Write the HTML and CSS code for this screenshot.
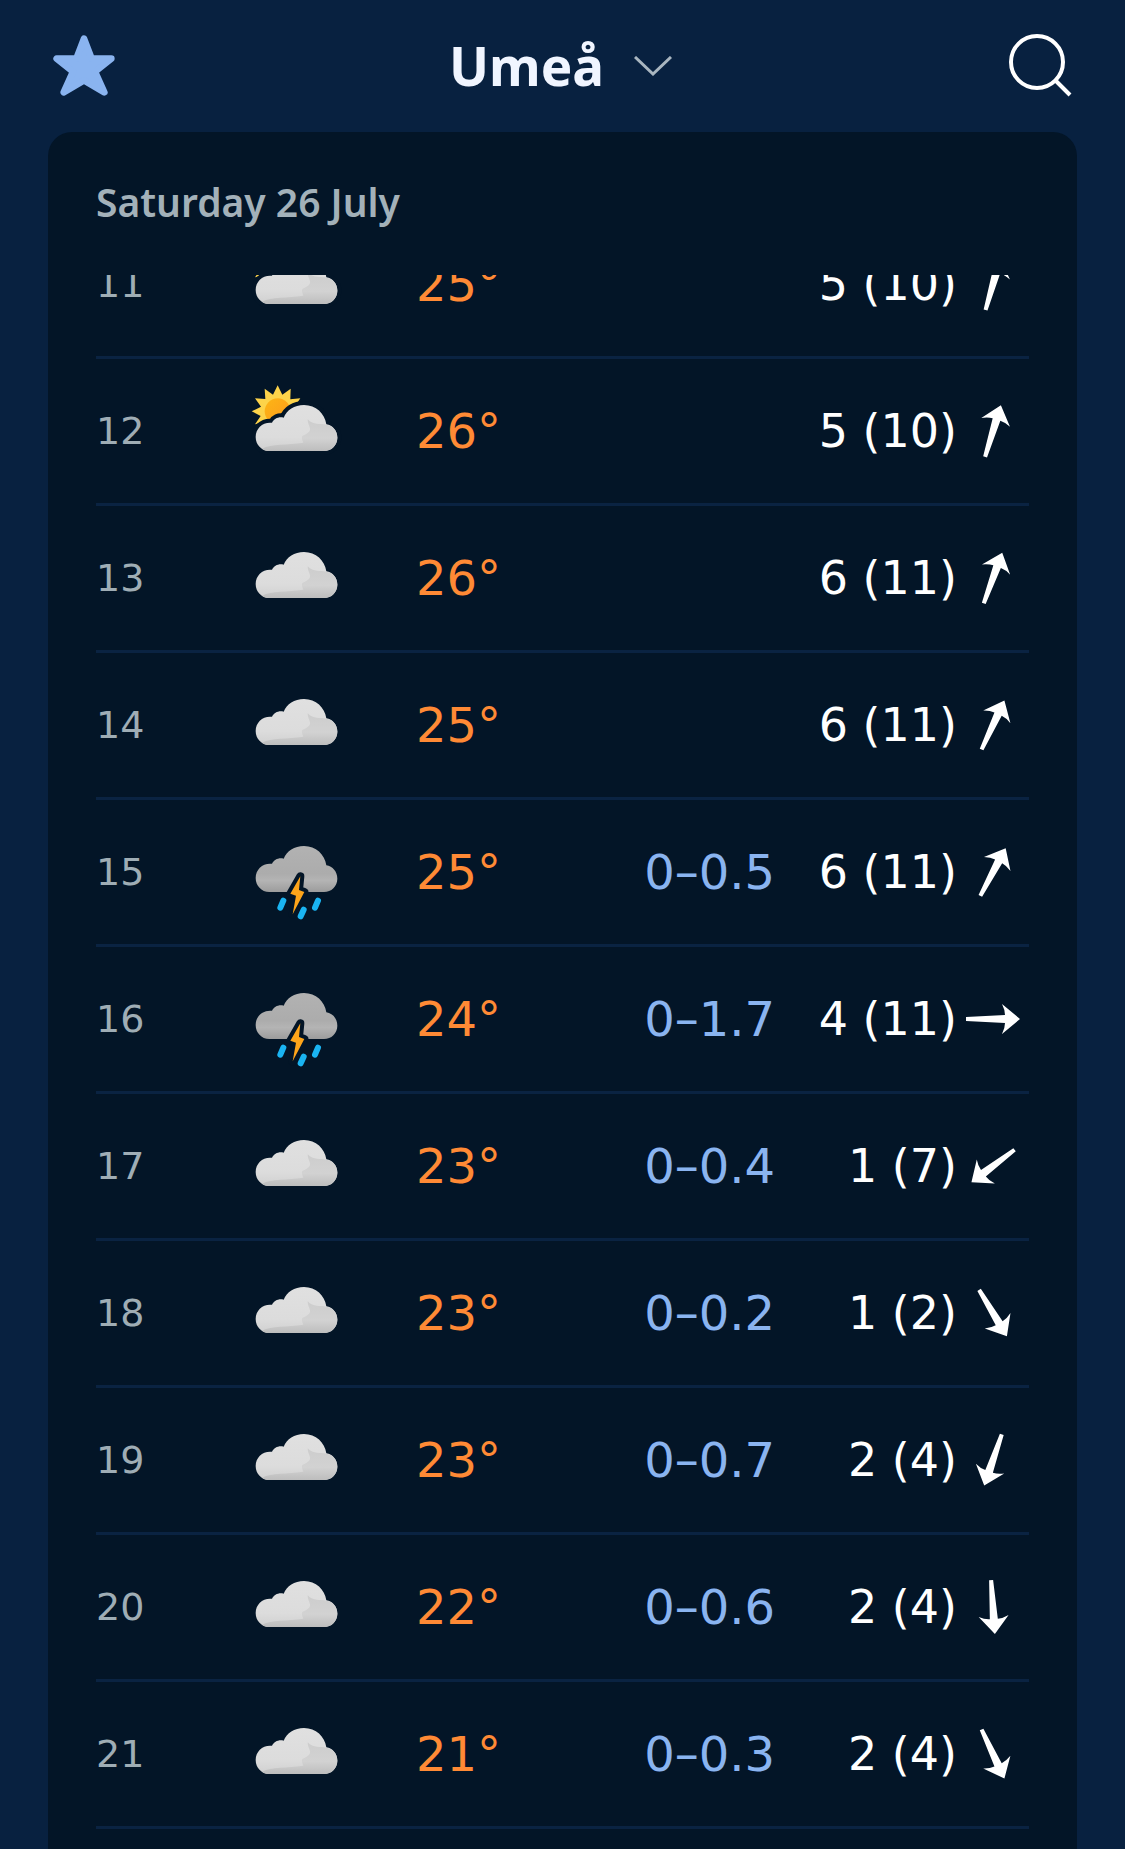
FILE: index.html
```html
<!DOCTYPE html>
<html lang="en">
<head>
    <meta charset="UTF-8">
    <meta name="viewport" content="width=device-width, initial-scale=1.0">
    <title>Umeå</title>
    <link rel="stylesheet" href="styles.css">
</head>
<body>
    <!-- Shared weather symbols -->
    <svg class="symbols" aria-hidden="true">
        <defs>
            <linearGradient id="cloud-fill" x1="0" y1="0" x2="0" y2="1">
                <stop offset="0" stop-color="#e0e0e0"/>
                <stop offset="0.7" stop-color="#dcdcdc"/>
                <stop offset="1" stop-color="#d0d0d0"/>
            </linearGradient>
            <linearGradient id="shade-fill" x1="0" y1="0" x2="0" y2="1">
                <stop offset="0" stop-color="#cdcdcd"/>
                <stop offset="0.6" stop-color="#d2d2d2"/>
                <stop offset="1" stop-color="#bdbdbd"/>
            </linearGradient>
            <linearGradient id="storm-fill" x1="0" y1="0" x2="0" y2="1">
                <stop offset="0" stop-color="#b2b2b2"/>
                <stop offset="0.6" stop-color="#acacac"/>
                <stop offset="0.75" stop-color="#b4b4b4"/>
                <stop offset="1" stop-color="#9c9c9c"/>
            </linearGradient>
            <linearGradient id="sun-fill" x1="0" y1="0" x2="1" y2="1">
                <stop offset="0" stop-color="#fdb515"/>
                <stop offset="1" stop-color="#fc9a1c"/>
            </linearGradient>
            <path id="cloud-shape" d="M88 243C64 243 47 224 47 201C47 176 66 158 90 158L96 158C102 146 116 139 131 143C140 120 163 105 192 105C228 105 254 130 259 163C278 166 292 182 292 203C292 226 274 243 252 243Z"/>
            <symbol id="cloud" viewBox="0 0 330 366">
                <use href="#cloud-shape" fill="url(#cloud-fill)"/>
                <path fill="url(#shade-fill)" d="M203 148C220 166 242 160 259 164C278 166 292 182 292 203C292 226 274 243 252 243H88C78 243 72 240 66 236C96 220 140 226 190 218C186 206 184 202 188 197C204 192 214 182 209 172C207 164 203 160 203 148Z"/>
            </symbol>
            <symbol id="partly" viewBox="0 0 330 366">
                <path fill="#fdd34a" d="M113 46L127 74L152 56L151 88L181 85L164 110L191 124L164 138L45 163L62 138L35 124L63 110L45 85L76 87L74 56L99 74Z"/>
                <circle cx="113" cy="124" r="39" fill="url(#sun-fill)"/>
                <use href="#cloud-shape" fill="#031527" stroke="#031527" stroke-width="24"/>
                <use href="#cloud"/>
            </symbol>
            <symbol id="storm" viewBox="0 0 330 366">
                <use href="#cloud-shape" fill="url(#storm-fill)"/>
                <path fill="#fea51a" stroke="#031527" stroke-width="24" stroke-linejoin="round" paint-order="stroke" d="M181 196L151 248L168 254L158 310L193 243L177 237Z"/>
                <path stroke="#1ab4f2" stroke-width="18" stroke-linecap="round" d="M130 269L121 290M191 296L182 316M234 269L225 290"/>
            </symbol>
            <symbol id="arrow" viewBox="-30 -30 60 60">
                <path fill="#fff" d="M0 -27L15 -9Q9 -12 4 -12L2 27H-2L-4 -12Q-9 -12 -15 -9Z"/>
            </symbol>
        </defs>
    </svg>

    <header class="topbar">
        <button class="icon-button" type="button" aria-label="Favourite">
            <svg class="icon" viewBox="66 71 192 192">
                <path fill="#8ab4f0" stroke="#8ab4f0" stroke-width="20" stroke-linejoin="round" d="M162 85L185 145L244 145L195 184L223 246L162 210L101 246L129 184L80 145L139 145Z"/>
            </svg>
        </button>
        <button class="place" type="button">
            Umeå
            <svg class="chevron" viewBox="0 0 38 20">
                <path fill="none" stroke="#a9b6c0" stroke-width="3" d="M1 1L19 18L37 1"/>
            </svg>
        </button>
        <button class="icon-button search" type="button" aria-label="Search">
            <svg class="icon" viewBox="0 0 64 64">
                <circle cx="28" cy="28" r="26" fill="none" stroke="#fff" stroke-width="4"/>
                <path stroke="#fff" stroke-width="4" d="M46 46L61 61"/>
            </svg>
        </button>
    </header>

    <main class="card">
        <h1 class="date">Saturday 26 July</h1>
        <div class="scroller">
            <table class="forecast">
                <colgroup>
                    <col class="col-hour">
                    <col class="col-symbol">
                    <col>
                    <col class="col-rain">
                    <col class="col-wind">
                    <col class="col-arrow">
                </colgroup>
                <tbody>
                    <tr>
                        <th scope="row">11</th>
                        <td><svg class="weather"><use href="#partly"/></svg></td>
                        <td class="temp">25°</td>
                        <td class="rain"></td>
                        <td class="wind">5 (10)</td>
                        <td class="direction"><svg class="arrow" viewBox="-30 -30 60 60"><use href="#arrow" x="-30" y="-30" width="60" height="60" transform="rotate(16)"/></svg></td>
                    </tr>
                    <tr>
                        <th scope="row">12</th>
                        <td><svg class="weather"><use href="#partly"/></svg></td>
                        <td class="temp">26°</td>
                        <td class="rain"></td>
                        <td class="wind">5 (10)</td>
                        <td class="direction"><svg class="arrow" viewBox="-30 -30 60 60"><use href="#arrow" x="-30" y="-30" width="60" height="60" transform="rotate(17)"/></svg></td>
                    </tr>
                    <tr>
                        <th scope="row">13</th>
                        <td><svg class="weather"><use href="#cloud"/></svg></td>
                        <td class="temp">26°</td>
                        <td class="rain"></td>
                        <td class="wind">6 (11)</td>
                        <td class="direction"><svg class="arrow" viewBox="-30 -30 60 60"><use href="#arrow" x="-30" y="-30" width="60" height="60" transform="rotate(20)"/></svg></td>
                    </tr>
                    <tr>
                        <th scope="row">14</th>
                        <td><svg class="weather"><use href="#cloud"/></svg></td>
                        <td class="temp">25°</td>
                        <td class="rain"></td>
                        <td class="wind">6 (11)</td>
                        <td class="direction"><svg class="arrow" viewBox="-30 -30 60 60"><use href="#arrow" x="-30" y="-30" width="60" height="60" transform="rotate(25)"/></svg></td>
                    </tr>
                    <tr>
                        <th scope="row">15</th>
                        <td><svg class="weather"><use href="#storm"/></svg></td>
                        <td class="temp">25°</td>
                        <td class="rain">0–0.5</td>
                        <td class="wind">6 (11)</td>
                        <td class="direction"><svg class="arrow" viewBox="-30 -30 60 60"><use href="#arrow" x="-30" y="-30" width="60" height="60" transform="rotate(28)"/></svg></td>
                    </tr>
                    <tr>
                        <th scope="row">16</th>
                        <td><svg class="weather"><use href="#storm"/></svg></td>
                        <td class="temp">24°</td>
                        <td class="rain">0–1.7</td>
                        <td class="wind">4 (11)</td>
                        <td class="direction"><svg class="arrow" viewBox="-30 -30 60 60"><use href="#arrow" x="-30" y="-30" width="60" height="60" transform="rotate(90)"/></svg></td>
                    </tr>
                    <tr>
                        <th scope="row">17</th>
                        <td><svg class="weather"><use href="#cloud"/></svg></td>
                        <td class="temp">23°</td>
                        <td class="rain">0–0.4</td>
                        <td class="wind">1 (7)</td>
                        <td class="direction"><svg class="arrow" viewBox="-30 -30 60 60"><use href="#arrow" x="-30" y="-30" width="60" height="60" transform="rotate(233)"/></svg></td>
                    </tr>
                    <tr>
                        <th scope="row">18</th>
                        <td><svg class="weather"><use href="#cloud"/></svg></td>
                        <td class="temp">23°</td>
                        <td class="rain">0–0.2</td>
                        <td class="wind">1 (2)</td>
                        <td class="direction"><svg class="arrow" viewBox="-30 -30 60 60"><use href="#arrow" x="-30" y="-30" width="60" height="60" transform="rotate(149)"/></svg></td>
                    </tr>
                    <tr>
                        <th scope="row">19</th>
                        <td><svg class="weather"><use href="#cloud"/></svg></td>
                        <td class="temp">23°</td>
                        <td class="rain">0–0.7</td>
                        <td class="wind">2 (4)</td>
                        <td class="direction"><svg class="arrow" viewBox="-30 -30 60 60"><use href="#arrow" x="-30" y="-30" width="60" height="60" transform="rotate(199)"/></svg></td>
                    </tr>
                    <tr>
                        <th scope="row">20</th>
                        <td><svg class="weather"><use href="#cloud"/></svg></td>
                        <td class="temp">22°</td>
                        <td class="rain">0–0.6</td>
                        <td class="wind">2 (4)</td>
                        <td class="direction"><svg class="arrow" viewBox="-30 -30 60 60"><use href="#arrow" x="-30" y="-30" width="60" height="60" transform="rotate(176)"/></svg></td>
                    </tr>
                    <tr>
                        <th scope="row">21</th>
                        <td><svg class="weather"><use href="#cloud"/></svg></td>
                        <td class="temp">21°</td>
                        <td class="rain">0–0.3</td>
                        <td class="wind">2 (4)</td>
                        <td class="direction"><svg class="arrow" viewBox="-30 -30 60 60"><use href="#arrow" x="-30" y="-30" width="60" height="60" transform="rotate(155)"/></svg></td>
                    </tr>
                </tbody>
            </table>
        </div>
    </main>
</body>
</html>
```
FILE: styles.css
```css
* {
    box-sizing: border-box;
}
body {
    display: flex;
    flex-direction: column;
    height: 100vh;
    margin: 0;
    overflow: hidden;
    background: #082140;
    color: #fff;
    font-family: "Noto Sans", sans-serif;
}
.symbols {
    position: absolute;
    width: 0;
    height: 0;
}
button {
    padding: 0;
    border: none;
    background: none;
    color: inherit;
    font: inherit;
    cursor: pointer;
}
svg {
    display: block;
}

/* Top bar */
.topbar {
    display: grid;
    grid-template-columns: 1fr auto 1fr;
    align-items: center;
    height: 132px;
    padding: 0 52px;
}
.icon-button {
    width: 64px;
    height: 64px;
}
.icon {
    width: 64px;
    height: 64px;
}
.search {
    justify-self: end;
}
.place {
    display: flex;
    align-items: center;
    gap: 30px;
    padding-right: 4px;
    color: #f0f5ff;
    font-size: 53px;
    font-weight: 700;
    line-height: 72px;
}
.chevron {
    width: 38px;
    height: 20px;
}

/* Day card */
.card {
    display: flex;
    flex: 1;
    flex-direction: column;
    min-height: 0;
    margin: 0 48px;
    padding: 0 48px;
    border-radius: 24px 24px 0 0;
    background: #031527;
}
.date {
    flex: none;
    margin: 0;
    padding: 42px 0 45px;
    color: #a3b1b9;
    font-size: 39px;
    font-weight: 600;
    line-height: 56px;
}
.scroller {
    flex: 1;
    min-height: 0;
    overflow: hidden;
}

/* Hourly rows, scrolled partly past the first one */
.forecast {
    width: 100%;
    margin-top: -63px;
    border-collapse: separate;
    border-spacing: 0;
    table-layout: fixed;
    font-family: "DejaVu Sans", sans-serif;
    font-size: 48px;
}
.col-hour { width: 144px; }
.col-symbol { width: 176px; }
.col-rain { width: 200px; }
.col-wind { width: 182px; }
.col-arrow { width: 72px; }
th,
td {
    height: 147px;
    padding: 0;
    border-bottom: 3px solid #0a2342;
    text-align: left;
    vertical-align: middle;
    white-space: nowrap;
}
th {
    color: #9fadb5;
    font-size: 38px;
    font-weight: normal;
}
.weather {
    width: 110px;
    height: 122px;
}
.temp { color: #ff8a35; }
.rain {
    color: #8ab4f0;
    text-align: right;
}
.wind {
    font-size: 46px;
    text-align: right;
}
.arrow {
    width: 60px;
    height: 60px;
    margin: 0 auto;
}
```
